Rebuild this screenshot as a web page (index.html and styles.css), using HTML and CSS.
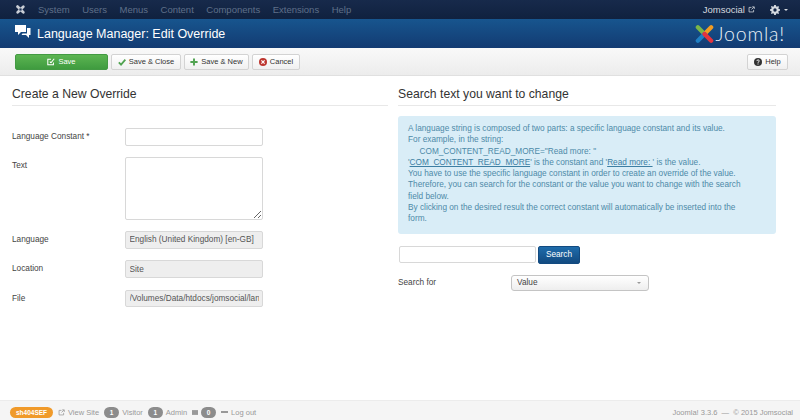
FILE: index.html
```html
<!DOCTYPE html>
<html lang="en">
<head>
<meta charset="utf-8">
<title>Language Manager: Edit Override</title>
<link rel="stylesheet" href="styles.css">
</head>
<body>
<nav class="topnav">
  <svg class="jicon" viewBox="0 0 20 20"><path fill="#c9ced6" d="M2 4.500a2.500 2.500 0 0 1 4.600-1.300L10 6.500l3.400-3.300A2.500 2.500 0 1 1 16.800 7L13.500 10l3.300 3a2.500 2.500 0 1 1-3.400 3.800L10 13.500l-3.400 3.300A2.500 2.500 0 1 1 3.200 13L6.500 10 3.200 7A2.500 2.500 0 0 1 2 4.500z"/><path fill="#1c3257" d="M8 8h4v4H8z"/></svg>
  <ul class="menu">
    <li>System</li><li>Users</li><li>Menus</li><li>Content</li><li>Components</li><li>Extensions</li><li>Help</li>
  </ul>
  <div class="nav-right">
    <span class="site">Jomsocial</span>
    <svg class="ext light" viewBox="0 0 10 10"><path d="M8 5.500V8.500H1.500V2H5M5 5 8.500 1.500M6 1.200h3v3" fill="none" stroke="currentColor" stroke-width="1.100"/></svg>
    <svg class="gear" viewBox="0 0 12 12"><path fill="#d5d9df" fill-rule="evenodd" d="M5 0h2l.3 1.600 1.100.5L9.800 1.200l1.100 1.100-.9 1.400.5 1.100L12 5v2l-1.500.3-.5 1.100.9 1.400-1.100 1.100-1.400-.9-1.100.5L7 12H5l-.3-1.500-1.100-.5-1.400.9L1.100 9.800l.9-1.400-.5-1.100L0 7V5l1.500-.3.500-1.100-.9-1.400 1.100-1.100 1.400.9 1.100-.5zM6 4a2 2 0 1 0 0 4 2 2 0 0 0 0-4z"/></svg>
    <span class="caret"></span>
  </div>
</nav>
<header class="titlebar">
  <svg class="comments" viewBox="0 0 16 14"><path fill="#fff" d="M0 0h11v7H6L3 10V7H0z"/><path fill="#fff" d="M12 3h3.500v7H14v3l-3-3H6.500l1-1.500H12z"/></svg>
  <h1>Language Manager: Edit Override</h1>
  <div class="logo">
    <svg class="logomark" viewBox="0 0 20 20">
      <path d="M3 3 10 10" stroke="#7ab648" stroke-width="4.500" stroke-linecap="round"/>
      <path d="M17 3 10 10" stroke="#f19c23" stroke-width="4.500" stroke-linecap="round"/>
      <path d="M3 17 10 10" stroke="#1f7fc4" stroke-width="4.500" stroke-linecap="round"/>
      <path d="M17 17 10 10" stroke="#e5343d" stroke-width="4.500" stroke-linecap="round"/>
    </svg>
    <span class="logotext">Joomla!</span>
  </div>
</header>
<div class="toolbar">
  <button class="btn btn-save"><svg class="ico" viewBox="0 0 10 10"><path d="M8 5.500V8.500H1V1.500H5M3.500 4.500 5 6l4-5" fill="none" stroke="#fff" stroke-width="1.300"/></svg>Save</button>
  <button class="btn btn-close"><svg class="ico" viewBox="0 0 10 10"><path d="M1 5.500 3.800 8.300 9.200 2" fill="none" stroke="#51a351" stroke-width="2.200"/></svg>Save &amp; Close</button>
  <button class="btn btn-new"><svg class="ico" viewBox="0 0 10 10"><path d="M5 .5v9M.5 5h9" fill="none" stroke="#51a351" stroke-width="2.400"/></svg>Save &amp; New</button>
  <button class="btn btn-cancel"><svg class="ico" viewBox="0 0 10 10"><circle cx="5" cy="5" r="5" fill="#bd362f"/><path d="M3 3 7 7M7 3 3 7" stroke="#fff" stroke-width="1.500"/></svg>Cancel</button>
  <button class="btn btn-help"><svg class="ico" viewBox="0 0 10 10"><circle cx="5" cy="5" r="5" fill="#333"/><path d="M3.500 3.800C3.600 2 6.600 2 6.600 3.700 6.600 4.800 5 4.800 5 6" fill="none" stroke="#fff" stroke-width="1.200"/><path d="M4.400 6.900h1.200v1.200H4.400z" fill="#fff"/></svg>Help</button>
</div>
<main class="content">
  <section class="col-left">
    <h2>Create a New Override</h2>
    <div class="form">
      <div class="row"><label>Language Constant *</label><input class="field" type="text"></div>
      <div class="row"><label>Text</label><textarea class="field area"></textarea></div>
      <div class="row"><label>Language</label><input class="field ro" type="text" readonly value="English (United Kingdom) [en-GB]"></div>
      <div class="row"><label>Location</label><input class="field ro" type="text" readonly value="Site"></div>
      <div class="row"><label>File</label><input class="field ro" type="text" readonly value="/Volumes/Data/htdocs/jomsocial/language/overrides/en-GB.override.ini"></div>
    </div>
  </section>
  <section class="col-right">
    <h2>Search text you want to change</h2>
    <div class="alert">
      A language string is composed of two parts: a specific language constant and its value.<br>
      For example, in the string:<br>
      <span class="indent">COM_CONTENT_READ_MORE="Read more: "</span><br>
      '<u>COM_CONTENT_READ_MORE</u>' is the constant and '<u>Read more: </u>' is the value.<br>
      You have to use the specific language constant in order to create an override of the value.<br>
      Therefore, you can search for the constant or the value you want to change with the search field below.<br>
      By clicking on the desired result the correct constant will automatically be inserted into the form.
    </div>
    <div class="search">
      <input class="field field-search" type="text">
      <button class="btn-search">Search</button>
    </div>
    <div class="row-search">
      <label>Search for</label>
      <div class="select"><span>Value</span><span class="sel-caret"></span></div>
    </div>
  </section>
</main>
<footer class="status">
  <span class="badge-sef">sh404SEF</span>
  <span class="stat"><svg class="ext" viewBox="0 0 10 10"><path d="M8 5.500V8.500H1.500V2H5M5 5 8.500 1.500M6 1.200h3v3" fill="none" stroke="currentColor" stroke-width="1.100"/></svg>View Site</span>
  <span class="stat"><span class="pill">1</span>Visitor</span>
  <span class="stat"><span class="pill">1</span>Admin</span>
  <span class="stat"><svg class="mail" viewBox="0 0 10 8"><path fill="currentColor" d="M0 0h10v8H0z"/></svg><span class="pill">0</span></span>
  <span class="stat"><span class="dash"></span>Log out</span>
  <span class="copy">Joomla! 3.3.6 &nbsp;—&nbsp; © 2015 Jomsocial</span>
</footer>
</body>
</html>
```
FILE: styles.css
```css
* { box-sizing: border-box; }
html, body { margin: 0; height: 420px; overflow: hidden; }
body {
  display: flex;
  flex-direction: column;
  font-family: "Liberation Sans", Arial, sans-serif;
  font-size: 8.250px;
  color: #333;
  background: #fff;
}
.topnav {
  height: 19px;
  flex: none;
  display: flex;
  align-items: center;
  padding: 0 12px 0 15px;
  background: linear-gradient(#172a4b, #10213f);
}
.jicon { width: 11px; height: 11px; margin-right: 12px; }
.menu { list-style: none; display: flex; gap: 12.500px; margin: 0; padding: 0; font-size: 9.500px; color: #5f7089; }
.nav-right { margin-left: auto; display: flex; align-items: center; color: #d5d9df; font-size: 9.500px; }
.light { width: 7px; height: 7px; margin: 0 15px 0 3px; }
.gear { width: 10px; height: 10px; }
.caret { width: 0; height: 0; margin-left: 4px; border: 2px solid transparent; border-top-color: #d5d9df; border-bottom: 0; }
.titlebar {
  height: 29px;
  flex: none;
  display: flex;
  align-items: center;
  padding: 0 15px;
  background: linear-gradient(#17558e, #133b72);
  color: #fff;
}
.comments { width: 16px; height: 14px; margin: -3px 6px 0 0; }
h1 { margin: 0; font-size: 12.500px; font-weight: 400; color: #fff; }
.logo { margin-left: auto; display: flex; align-items: center; gap: 2px; }
.logomark { width: 19px; height: 20px; }
.logotext { font-family: Lato, sans-serif; font-weight: 300; font-size: 19.500px; line-height: 22px; letter-spacing: .800px; color: #eaf1f7; }
.toolbar {
  height: 28px;
  flex: none;
  display: flex;
  align-items: flex-start;
  gap: 3px;
  padding: 6px 12px 0 15px;
  background: linear-gradient(#f9f9f9, #ececec);
  border-bottom: 1px solid #e0e0e0;
}
.btn {
  height: 15.500px;
  padding: 0;
  display: flex;
  align-items: center;
  justify-content: center;
  gap: 3px;
  font: 7.500px "Liberation Sans", Arial, sans-serif;
  color: #333;
  background: linear-gradient(#fff, #f0f0f0);
  border: 1px solid #d3d3d3;
  border-radius: 2px;
}
.ico { width: 8px; height: 8px; }
.btn-save { width: 93px; color: #fff; background: linear-gradient(#5cb552, #3f9b3f); border-color: #439a43; }
.btn-close { width: 70px; }
.btn-new { width: 65px; }
.btn-cancel { width: 48px; }
.btn-help { margin-left: auto; width: 41px; }
.content { flex: 1; display: flex; min-height: 0; }
.col-left { width: 398px; padding: 7px 10px 0 12px; }
.col-right { flex: 1; padding: 7px 24px 0 0; }
h2 { margin: 0; height: 23px; font-size: 12.200px; font-weight: 400; line-height: 22px; color: #333; border-bottom: 1px solid #e8e8e8; }
.form { padding-top: 22px; display: flex; flex-direction: column; gap: 10.800px; }
.row { display: flex; align-items: flex-start; }
.row label { width: 113px; line-height: 18.500px; color: #444; }
.field {
  width: 138px;
  height: 17.500px;
  padding: 0 3.500px;
  font: 8.250px "Liberation Sans", Arial, sans-serif;
  color: #555;
  background: #fff;
  border: 1px solid #d8d8d8;
  border-radius: 2px;
  outline: none;
}
.field-search { width: 137px; }
.area { height: 63px; display: block; }
.ro { background: #eee; }
.alert {
  margin-top: 10px;
  height: 118px;
  padding: 7px 28px 7px 10px;
  line-height: 11.300px;
  color: #4d8aa8;
  background: #d9edf7;
  border-radius: 3px;
}
.alert u { color: #3d7fa3; }
.indent { padding-left: 11.500px; }
.search { margin-top: 11.500px; display: flex; align-items: center; gap: 2px; padding-left: 1px; }
.btn-search {
  width: 42px;
  height: 18px;
  padding: 0;
  font: 8.250px "Liberation Sans", Arial, sans-serif;
  color: #fff;
  background: linear-gradient(#1f6cab, #124a80);
  border: 1px solid #124a80;
  border-radius: 2px;
}
.row-search { margin-top: 11px; display: flex; align-items: center; }
.row-search label { width: 113px; color: #444; }
.select {
  width: 138px;
  height: 16.500px;
  padding: 0 7px 0 5px;
  display: flex;
  align-items: center;
  justify-content: space-between;
  color: #444;
  background: linear-gradient(#fff, #eee);
  border: 1px solid #c4c4c4;
  border-radius: 3px;
}
.sel-caret { width: 0; height: 0; border: 2px solid transparent; border-top-color: #999; border-bottom: 0; }
.status {
  height: 20px;
  flex: none;
  display: flex;
  align-items: center;
  gap: 5px;
  padding: 3px 7px 0 10px;
  font-size: 7.500px;
  color: #999;
  background: #f5f5f5;
  border-top: 1px solid #ececec;
}
.badge-sef { width: 43px; height: 11px; text-align: center; line-height: 11px; font-weight: 700; font-size: 6.500px; color: #fff; background: #f09a2a; border-radius: 6px; }
.stat { display: flex; align-items: center; gap: 3px; }
.ext { width: 7px; height: 7px; }
.pill { width: 15px; height: 11px; line-height: 11px; text-align: center; font-size: 6.500px; font-weight: 700; color: #fff; background: #8c8c8c; border-radius: 6px; }
.mail { width: 6px; height: 5px; }
.dash { width: 7px; height: 2px; background: #999; }
.copy { margin-left: auto; }
```
